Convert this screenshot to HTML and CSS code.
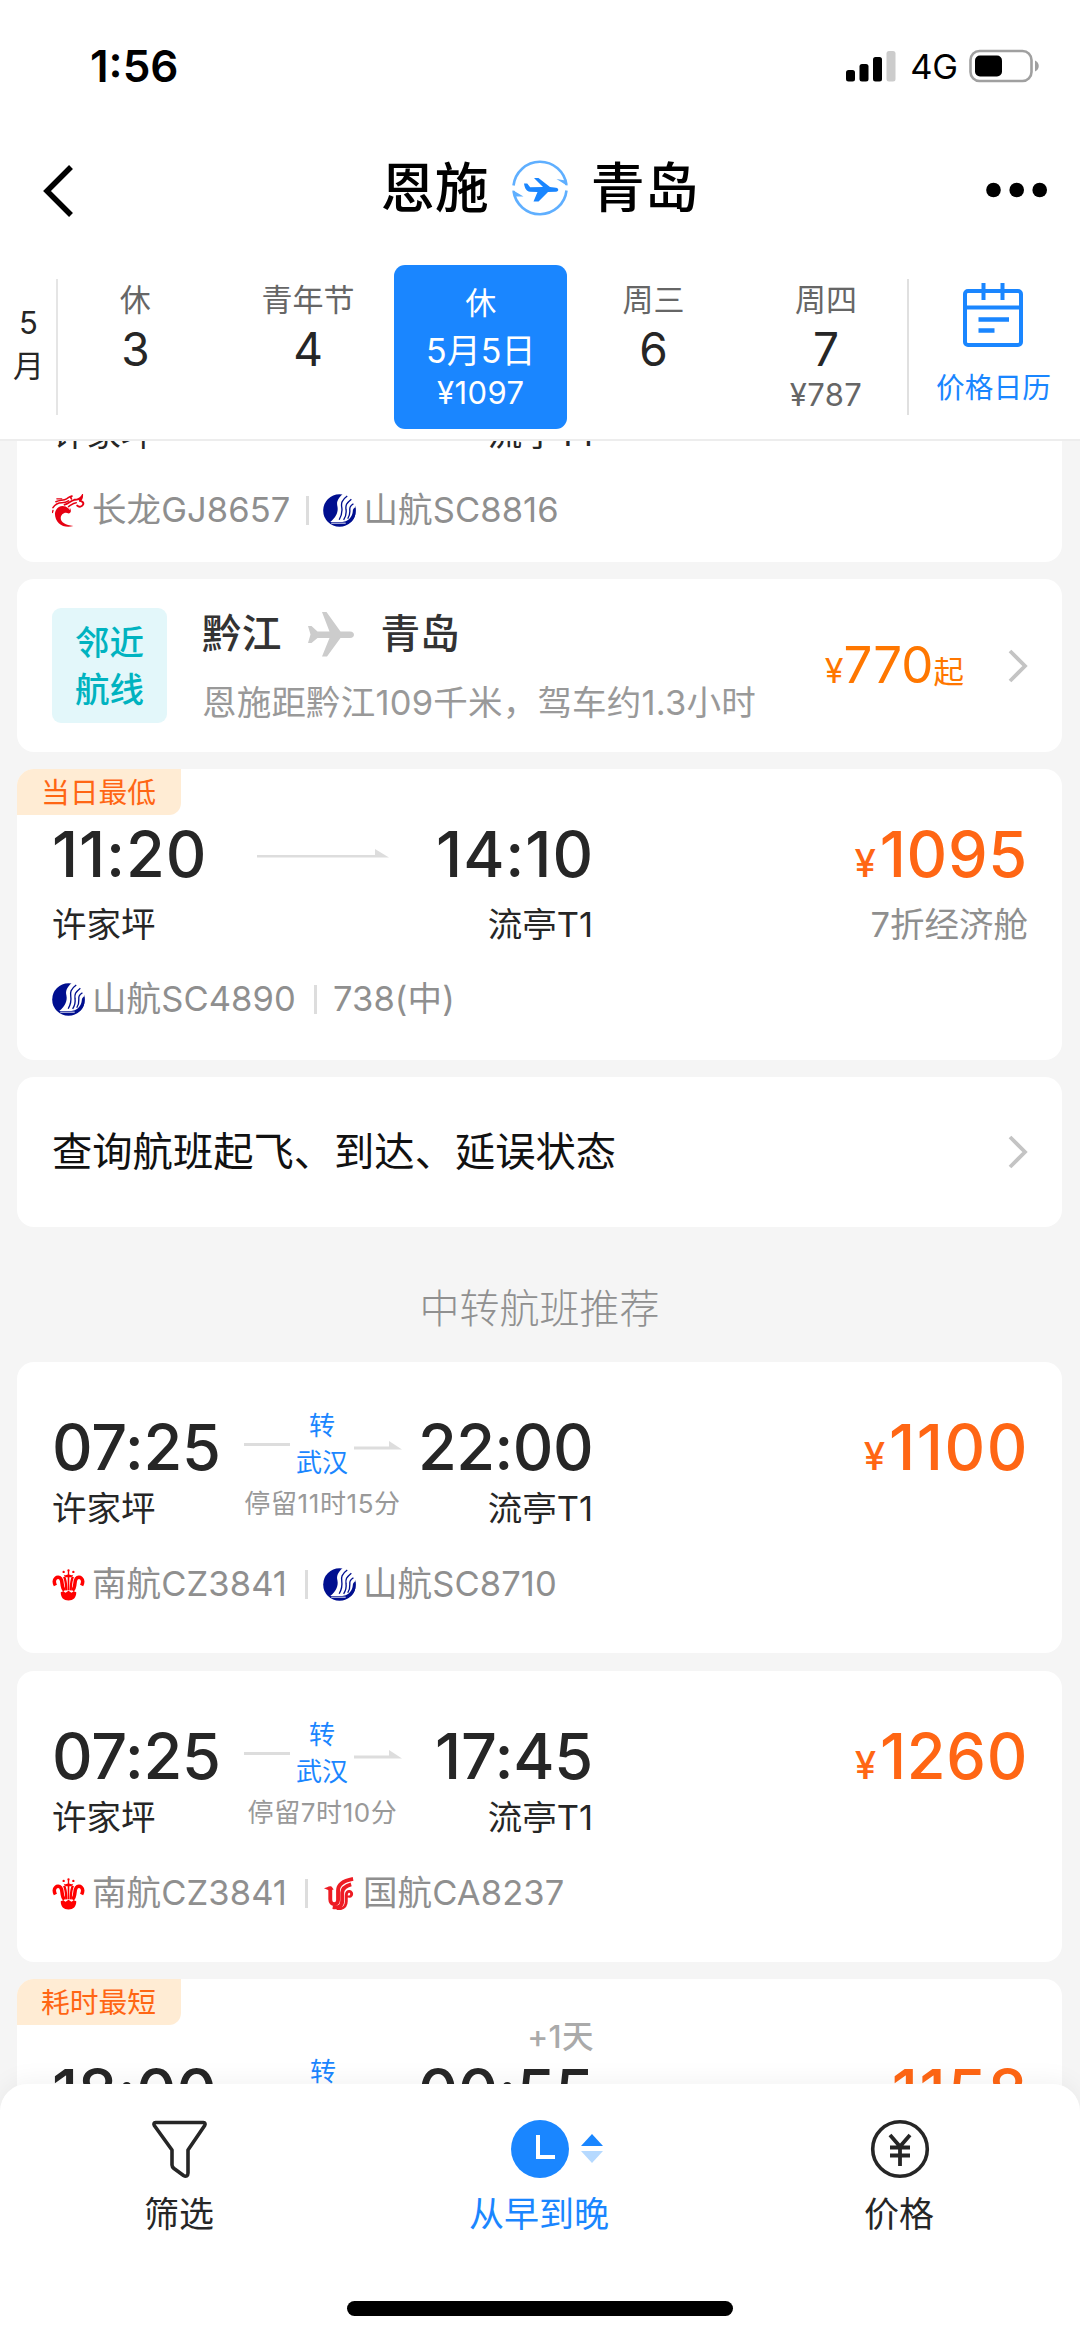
FILE: index.html
```html
<!DOCTYPE html>
<html lang="zh-CN">
<head>
<meta charset="utf-8">
<title>恩施 - 青岛</title>
<link rel="stylesheet" href="styles.css">
</head>
<body>
<svg width="0" height="0" class="sprite">
  <symbol id="shandong" viewBox="0 0 32 32">
    <circle cx="16" cy="16" r="15.800" fill="#000f8f"/>
    <path fill="#fff" d="M19 0C14 5 13 8 14 12c1 5-1 10-7 15.200h16c5-3 7-7 7-12L32 10V0z"/>
    <g fill="none" stroke="#000f8f" stroke-width="1.300">
      <path d="M23.500 2C18 6 17.500 9 18.200 13c.8 5-.2 8-2.500 12"/>
      <path d="M27.500 5C22.500 9 21.800 11 22.300 15c.6 4-.2 7-2.300 10"/>
      <path d="M29.500 9.500C26 12 25.800 13 26 16c.2 3-.7 6-2 8"/>
    </g>
    <path fill="#000f8f" d="M31.500 13.500c-2 0-2.500 1-2.700 4-.5 4-3 7.500-6.800 9L10 29l8 1.500c8 0 13.500-6 13.500-13z"/>
    <path fill="none" stroke="#fff" stroke-width=".9" d="M8 28.300h14"/>
  </symbol>
  <symbol id="loong" viewBox="0 0 34 34">
    <path fill="#e60012" d="M3 20C4 14 9 11 14 13c2 1 4 3 5 4l-1-3c3 3 1 6-1 6-4-2-8 1-8 5 0 4 5 7 13 8C12 36 3 30 3 20z"/>
    <g fill="none" stroke="#e60012" stroke-linecap="round">
      <path stroke-width="1.600" d="M1 14c2-3 5-5 9-5 3 0 5-.5 7-2"/>
      <path stroke-width="1.600" d="M4 8c4-2 8-1 11-3 2-1 3-3 6-3-2 1-2 2-1 3"/>
      <path stroke-width="2" d="M13 11c4-1 6-4 10-5 3 0 6-1 8-4 0 3-1 4-3 5 3 0 5 2 4 4s-4 3-6 1"/>
      <path stroke-width="1.600" d="M17 13c3-2 5-4 8-4"/>
      <path stroke-width="1.400" d="M5 5h5M1 17l-.5 2"/>
    </g>
  </symbol>
  <symbol id="southern" viewBox="0 0 34 34">
    <g fill="none" stroke="#f00">
      <path stroke-width="3.600" d="M3.500 18C0 11 6 7.500 9 11c2.500 3 0 9 4 12"/>
      <path stroke-width="3.600" d="M30.500 18c3.500-7-2.500-10.500-5.500-7-2.500 3 0 9-4 12"/>
      <path stroke-width="2.400" d="M12.500 9c2 4 2 9 2.300 14M21.500 9c-2 4-2 9-2.300 14"/>
      <path stroke-width="1.700" d="M17 8v15"/>
    </g>
    <path fill="#f00" d="M9 25l2.500-1 2.500 1.500 3-2 3 2 2.500-1.500 2.500 1c0 5.500-3 8.500-8 8.500S9 30.500 9 25z"/>
    <g fill="#f00"><circle cx="17" cy="2.500" r="1.200"/><circle cx="12" cy="4" r="1.200"/><circle cx="22" cy="4" r="1.200"/><path d="M16.300 3h1.400v4h-1.400zM12 7l2 .5 3-1 3 1 2-.5-2 2.500h-6z"/></g>
  </symbol>
  <symbol id="airchina" viewBox="0 0 32 34">
    <g fill="none" stroke="#ed1c24" stroke-width="4">
      <path d="M6.500 12v11c0 7 8 6 8 1V14C14.500 6 22 3.500 30 2"/>
      <path d="M9 31c8 1 9.800-2 9.800-7v-8c0-5 4-7 9.200-8.500"/>
      <path stroke-width="3" d="M13 33c8 0 10-3 10-8v-6c0-7 7.500-4 5 0-1 1.500-3 1-3 0"/>
    </g>
    <path fill="#ed1c24" d="M0 11.500c3 0 5-3 8-1.500l2 3-4.500 1z"/>
  </symbol>
  <symbol id="arrow" viewBox="0 0 132 9">
    <path fill="#ddd" d="M0 6h118V0l14 8.500H0z"/>
  </symbol>
  <symbol id="arrow-short" viewBox="0 0 48 9">
    <path fill="#ddd" d="M0 5.500h35V0l13 8.500H0z"/>
  </symbol>
  <symbol id="chevron" viewBox="0 0 20 34">
    <path fill="none" stroke="#c4c4c4" stroke-width="3.800" d="M2 2l15 15L2 32"/>
  </symbol>
</svg>

<header class="top">
  <div class="status">
    <span class="clock">1:56</span>
    <div class="indicators">
      <svg width="50" height="32" viewBox="0 0 50 32">
        <rect x="0" y="20" width="9" height="11.500" rx="2.500"/>
        <rect x="13.500" y="14" width="9" height="17.500" rx="2.500"/>
        <rect x="27" y="7" width="9" height="24.500" rx="2.500"/>
        <rect x="40.500" y="1" width="9" height="30.500" rx="2.500" fill="#ccc"/>
      </svg>
      <span class="network">4G</span>
      <svg width="72" height="34" viewBox="0 0 72 34">
        <rect x="1.500" y="2" width="61" height="30" rx="9" fill="none" stroke="#a0a0a0" stroke-width="2.600"/>
        <rect x="6" y="6.500" width="27" height="21" rx="5"/>
        <path d="M66 11.500c5 2 5 9 0 11z" fill="#a0a0a0"/>
      </svg>
    </div>
  </div>
  <div class="nav">
    <svg class="back" width="34" height="56" viewBox="0 0 34 56"><path d="M30 4L6 28l24 24" fill="none" stroke="#000" stroke-width="5.500"/></svg>
    <h1 class="route-title">
      <span>恩施</span>
      <svg width="58" height="58" viewBox="0 0 58 58">
        <g fill="none" stroke="#5fafff" stroke-width="2.600">
          <path d="M2.500 26.500A26.700 26.700 0 0 1 55.500 26"/>
          <path d="M55.500 31.500A26.700 26.700 0 0 1 2.500 32"/>
        </g>
        <path fill="#5fafff" d="M56.500 27L45.500 20l9 1.500zM1.500 31l11 6.500H3.500z"/>
        <path fill="#1a86ff" d="M13 24.500h3.200l3 3.700L32 28l-9-9h4.500L39 28l6 .8c3 .6 3 3.700 0 3.900l-8 .3-9.500 9.500H22.500l4-9.500-7.500-.2c-3.500-.3-5.300-3.500-6-8.300z"/>
      </svg>
      <span>青岛</span>
    </h1>
    <svg class="more" width="64" height="18" viewBox="0 0 64 18"><circle cx="8.500" cy="9" r="7.300"/><circle cx="31.700" cy="9" r="7.300"/><circle cx="54.700" cy="9" r="7.300"/></svg>
  </div>
  <div class="dates">
    <div class="month"><span>5</span><span>月</span></div>
    <div class="days">
      <div class="day"><span class="label">休</span><span class="num">3</span></div>
      <div class="day"><span class="label">青年节</span><span class="num">4</span></div>
      <div class="day selected"><span class="label">休</span><span class="num">5月5日</span><span class="fare">¥1097</span></div>
      <div class="day"><span class="label">周三</span><span class="num">6</span></div>
      <div class="day"><span class="label">周四</span><span class="num">7</span><span class="fare">¥787</span></div>
    </div>
    <div class="calendar">
      <svg width="62" height="66" viewBox="0 0 62 66" fill="none" stroke="#1a86ff" stroke-width="4">
        <rect x="3" y="9" width="56" height="54" rx="3"/>
        <path d="M3 25.500h56M21.500 1v17M40.500 1v17"/>
        <path d="M16.500 37.500h30.500M16.500 48.500h16" stroke-width="4.500"/>
      </svg>
      <span>价格日历</span>
    </div>
  </div>
</header>

<main class="list">
  <section class="card flight clipped">
    <div class="airports"><span>许家坪</span><span>流亭T1</span></div>
    <div class="carriers">
      <svg class="logo"><use href="#loong"/></svg><span>长龙GJ8657</span><i class="bar"></i><svg class="logo"><use href="#shandong"/></svg><span>山航SC8816</span>
    </div>
  </section>

  <section class="card nearby">
    <div class="badge"><span>邻近</span><span>航线</span></div>
    <div class="nearby-info">
      <div class="nearby-route">
        <span>黔江</span>
        <svg width="48" height="46" viewBox="0 0 48 46"><path fill="#ccc" d="M1 15h3.500l6 5.500h12L15 1h4.500l14 19.500H43c5.300 0 5.300 6.500 0 6.500h-9.500l-13.500 18.500H15L22.500 27h-12L4.500 32H1l2.500-8.500z"/></svg>
        <span>青岛</span>
      </div>
      <div class="nearby-note">恩施距黔江109千米，驾车约1.3小时</div>
    </div>
    <div class="nearby-price"><span class="yen">¥</span><span class="amount">770</span><span class="from">起</span></div>
    <svg class="chevron"><use href="#chevron"/></svg>
  </section>

  <section class="card flight direct">
    <span class="tag">当日最低</span>
    <div class="trip">
      <span class="time loose">11:20</span>
      <div class="via"><svg class="arrow"><use href="#arrow"/></svg></div>
      <span class="time arrive loose">14:10</span>
      <span class="airport">许家坪</span>
      <span class="airport arrive">流亭T1</span>
    </div>
    <div class="price"><div class="sum"><span class="yen">¥</span><span>1095</span></div><div class="cabin">7折经济舱</div></div>
    <div class="carriers">
      <svg class="logo"><use href="#shandong"/></svg><span>山航SC4890</span><i class="bar wide"></i><span>738(中)</span>
    </div>
  </section>

  <section class="card query">
    <span>查询航班起飞、到达、延误状态</span>
    <svg class="chevron"><use href="#chevron"/></svg>
  </section>

  <h2 class="section-title">中转航班推荐</h2>

  <section class="card flight transfer">
    <div class="trip">
      <span class="time">07:25</span>
      <div class="via">
        <div class="stop"><i class="line"></i><div class="city"><span>转</span><span>武汉</span></div><svg class="arrow-short"><use href="#arrow-short"/></svg></div>
        <span class="layover">停留11时15分</span>
      </div>
      <span class="time arrive tight">22:00</span>
      <span class="airport">许家坪</span>
      <span class="airport arrive">流亭T1</span>
    </div>
    <div class="price"><div class="sum"><span class="yen">¥</span><span class="loose">1100</span></div></div>
    <div class="carriers">
      <svg class="logo"><use href="#southern"/></svg><span>南航CZ3841</span><i class="bar mid"></i><svg class="logo"><use href="#shandong"/></svg><span>山航SC8710</span>
    </div>
  </section>

  <section class="card flight transfer">
    <div class="trip">
      <span class="time">07:25</span>
      <div class="via">
        <div class="stop"><i class="line"></i><div class="city"><span>转</span><span>武汉</span></div><svg class="arrow-short"><use href="#arrow-short"/></svg></div>
        <span class="layover">停留7时10分</span>
      </div>
      <span class="time arrive">17:45</span>
      <span class="airport">许家坪</span>
      <span class="airport arrive">流亭T1</span>
    </div>
    <div class="price"><div class="sum"><span class="yen">¥</span><span>1260</span></div></div>
    <div class="carriers">
      <svg class="logo"><use href="#southern"/></svg><span>南航CZ3841</span><i class="bar mid"></i><svg class="logo"><use href="#airchina"/></svg><span>国航CA8237</span>
    </div>
  </section>

  <section class="card flight overnight">
    <span class="tag">耗时最短</span>
    <span class="next-day">+1天</span>
    <div class="trip">
      <span class="time">18:00</span>
      <div class="via">
        <div class="stop"><div class="city"><span>转</span></div></div>
      </div>
      <span class="time arrive tight">00:55</span>
    </div>
    <div class="price"><div class="sum"><span class="yen">¥</span><span class="loose">1158</span></div></div>
  </section>
</main>

<footer class="tabs">
  <div class="tab-row">
    <div class="tab">
      <svg width="60" height="60" viewBox="0 0 60 60"><path fill="none" stroke="#262626" stroke-width="3.600" stroke-linejoin="round" d="M5.500 3.500h48c1.500 0 2 1.500 1.200 3L38 31v23c0 3-2 4-4.500 2.500L24 49.500c-1-.8-2-2-2-3.500V31L4.300 6.500c-.8-1.500-.3-3 1.200-3z"/></svg>
      <span>筛选</span>
    </div>
    <div class="tab active">
      <div class="clock-icon">
        <svg width="60" height="60" viewBox="0 0 60 60"><circle cx="30" cy="30" r="29" fill="#1a86ff"/><path d="M28 16v22h17" fill="none" stroke="#fff" stroke-width="4"/></svg>
        <svg class="sort" width="22" height="30" viewBox="0 0 22 30"><path d="M0 12L11 0l11 12z" fill="#1a86ff"/><path d="M0 17h22L11 29z" fill="#b5d9ff"/></svg>
      </div>
      <span>从早到晚</span>
    </div>
    <div class="tab">
      <svg width="60" height="60" viewBox="0 0 60 60" fill="none" stroke="#262626"><circle cx="30" cy="30" r="27.300" stroke-width="3.600"/><path stroke-width="3.800" d="M20 16l10 11.500L40 16M20 28.500h20M20 36.500h20M30 27v20"/></svg>
      <span>价格</span>
    </div>
  </div>
  <div class="home"></div>
</footer>
</body>
</html>
```

FILE: styles.css
```css
* { box-sizing: border-box; margin: 0; padding: 0; }
body {
  width: 1080px; height: 2339px; overflow: hidden;
  display: flex; flex-direction: column;
  background: #f5f5f5; color: #262626;
  font-family: Inter, "Noto Sans CJK SC", sans-serif;
  font-size: 34.5px; line-height: 46px; font-weight: 400;
  white-space: nowrap;
}
.sprite { position: absolute; }
svg { display: block; flex: none; }

.top { height: 441px; flex: none; background: #fff; border-bottom: 2px solid #ededed; }
.status { height: 132px; padding: 0 39.500px 0 90px; display: flex; align-items: center; justify-content: space-between; color: #000; }
.clock { font-size: 44px; font-weight: 600; }
.indicators { display: flex; align-items: center; }
.network { font-size: 34.5px; margin: 2px 11px 0 14px; font-weight: 400; letter-spacing: -0.4px; }
.nav { height: 112px; padding: 0 31px 0 40.500px; display: flex; align-items: center; justify-content: space-between; }
.more { margin-top: 4px; }
.back { margin-top: 6px; }
.route-title { display: flex; align-items: center; gap: 22px; font-size: 54px; line-height: 64px; font-weight: 500; color: #000; margin: 2px 0 0 20px; }
.route-title svg { margin-top: -2px; }
.dates { display: flex; align-items: flex-start; padding-top: 21px; height: 190px; }
.month { flex: none; width: 58px; height: 136px; margin-top: 14px; border-right: 2px solid #e5e5e5; display: flex; flex-direction: column; align-items: center; justify-content: center; font-size: 31px; line-height: 42.500px; padding: 0 0 5px 1px; }
.days { flex: none; display: grid; grid-template-columns: repeat(5, 172.700px); margin-left: -9px; }
.day { height: 164px; display: flex; flex-direction: column; align-items: center; padding-top: 14px; }
.label { font-size: 31px; line-height: 42px; color: #666; }
.num { font-size: 46px; line-height: 57px; }
.fare { font-size: 31px; line-height: 34px; color: #666; letter-spacing: 0.4px; }
.selected { background: #1a86ff; border-radius: 11px; padding-top: 17px; }
.selected .label, .selected .fare, .selected .num { color: #fff; }
.selected .num { font-size: 34px; line-height: 53px; }
.selected .fare { line-height: 32px; }
.calendar { flex: 1; height: 136px; margin: 14px 0 0 -5.500px; border-left: 2px solid #e0e0e0; display: flex; flex-direction: column; align-items: center; color: #1a86ff; font-size: 28.700px; padding: 3px 2px 0 0; gap: 19px; line-height: 42px; }

.list { flex: none; height: 1670px; overflow: hidden; padding: 0 18px 0 17px; }
.card { background: #fff; border-radius: 17px; margin-bottom: 17px; padding: 0 34px 0 35px; position: relative; }
.flight { height: 291px; display: grid; grid-template-columns: 541px 1fr; grid-template-rows: 199px 46px; align-content: start; }
.transfer { margin-bottom: 18px; }
.transfer + .transfer { margin-bottom: 17px; }
.clipped { height: 121px; display: block; border-top-left-radius: 0; border-top-right-radius: 0; }
.airports { width: 541px; display: flex; justify-content: space-between; margin-top: -30px; padding-bottom: 30px; }
.carriers { grid-column: 1 / 3; display: flex; align-items: center; color: #8f8f8f; height: 46px; letter-spacing: 0.1px; }
.logo { width: 33px; height: 33px; margin-right: 7px; }
.bar { width: 3px; height: 29px; background: #ddd; margin: 0 14px 0 16px; }
.mid { margin: 0 15px 0 18px; }
.wide { margin: 0 16px 0 18px; }

.nearby { height: 173px; display: flex; align-items: center; }
.badge { width: 115px; height: 115px; border-radius: 9px; background: #e3f7fa; color: #00b3c0; font-weight: 500; display: flex; flex-direction: column; align-items: center; justify-content: center; line-height: 47px; padding: 1px 0 0; }
.nearby-info { margin-left: 35px; flex: 1; padding-top: 5px; }
.nearby-route { display: flex; align-items: center; gap: 25.500px; font-size: 39.700px; line-height: 56px; font-weight: 500; color: #333; }
.nearby-note { color: #999; line-height: 56px; padding-top: 13px; letter-spacing: 0.2px; }
.nearby-price { color: #ff7700; display: flex; align-items: baseline; margin-top: -2px; }
.nearby-price .yen { font-size: 34px; }
.nearby-price .amount { font-size: 51px; line-height: 60px; }
.nearby-price .from { font-size: 30.500px; }
.chevron { width: 20px; height: 34px; margin-left: 44px; }

.tag { position: absolute; left: 0; top: 0; width: 164px; height: 46px; border-radius: 17px 0 12px 0; background: #ffecd4; color: #ff6614; font-size: 28.800px; line-height: 47px; text-align: center; padding-right: 1px; }
.trip { padding-top: 44.500px; display: grid; grid-template-columns: 1fr 158px 1fr; grid-template-rows: 79px 46px; align-content: start; }
.time { font-size: 63px; line-height: 80px; font-weight: 500; letter-spacing: -0.3px; }
.loose { letter-spacing: 0.9px; margin-right: -1px; }
.sum .loose { letter-spacing: 1.6px; }
.tight { letter-spacing: -0.6px; }
.arrive { text-align: right; grid-column: 3; }
.airport { line-height: 46px; }
.via { grid-column: 2; grid-row: 1 / 3; display: flex; flex-direction: column; align-items: center; }
.arrow { width: 132px; height: 9px; margin-top: 35px; }
.stop { display: flex; align-items: center; }
.line { width: 46px; height: 3px; background: #ddd; }
.city { width: 64px; display: flex; flex-direction: column; align-items: center; font-size: 26px; line-height: 37.500px; color: #1a86ff; padding-left: 1px; }
.arrow-short { width: 48px; height: 9px; margin-top: 2px; }
.layover { font-size: 26px; line-height: 43px; color: #999; letter-spacing: 0.6px; }
.price { padding-top: 44.500px; text-align: right; }
.sum { height: 79px; color: #ff6614; font-size: 63px; line-height: 80px; font-weight: 500; display: flex; justify-content: flex-end; align-items: baseline; letter-spacing: 0.7px; }
.sum .yen { font-size: 38.500px; font-weight: 500; margin-right: 3px; }
.cabin { color: #8f8f8f; line-height: 46px; }
.direct { grid-template-rows: 207px 46px; }
.direct .trip { grid-template-rows: 88px 46px; }
.direct .cabin { padding-top: 9px; }
.query { height: 150px; display: flex; align-items: center; justify-content: space-between; font-size: 40.300px; color: #111; }
.section-title { height: 118px; line-height: 129px; text-align: center; font-size: 40px; font-weight: 300; color: #909090; }
.next-day { position: absolute; right: 468px; top: 36px; font-size: 31.500px; line-height: 44px; color: #aaa; font-weight: 500; letter-spacing: 0.4px; }
.overnight .trip, .overnight .price { padding-top: 73px; }
.overnight .stop { padding-top: 1px; }

.tabs { flex: none; height: 255px; margin-top: -27px; position: relative; background: #fff; border-radius: 27px 27px 0 0; box-shadow: 0 -4px 24px rgba(0,0,0,.05); display: flex; flex-direction: column; align-items: center; }
.tab-row { display: grid; grid-template-columns: repeat(3, 1fr); width: 100%; padding-top: 35px; height: 217px; }
.tab { display: flex; flex-direction: column; align-items: center; gap: 11px; line-height: 48px; font-size: 35px; }
.tab > span { margin-right: 2px; }
.active { color: #1a86ff; }
.clock-icon { position: relative; }
.sort { position: absolute; left: 71px; top: 15px; }
.home { width: 386px; height: 15px; border-radius: 8px; background: #000; }
```
